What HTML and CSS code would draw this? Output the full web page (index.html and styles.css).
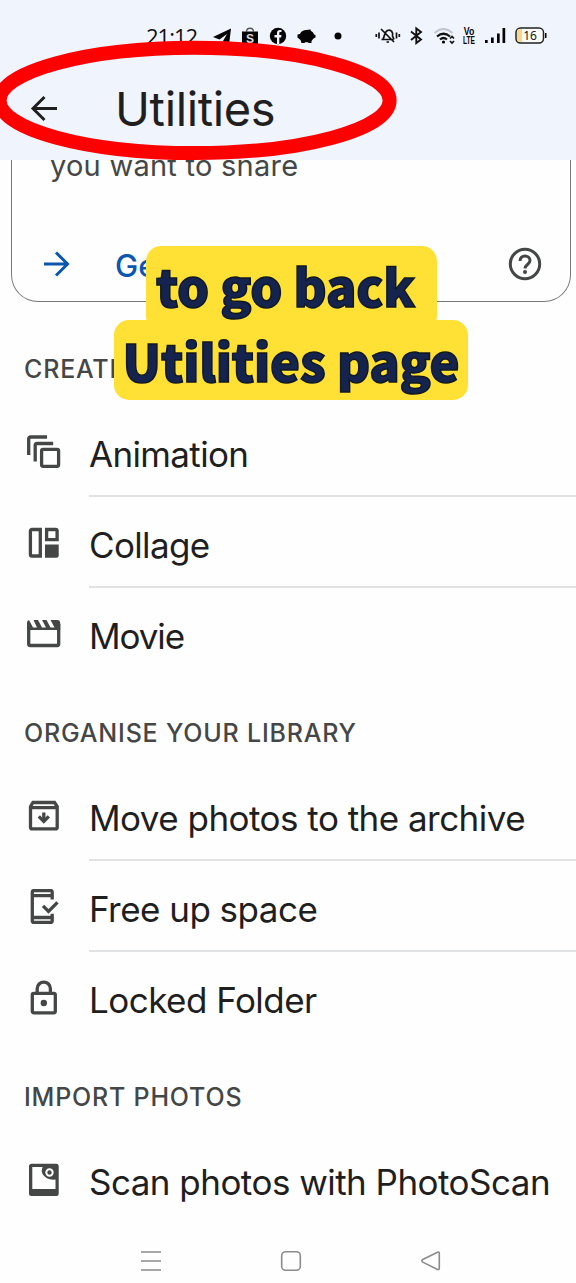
FILE: index.html
```html
<!DOCTYPE html>
<html lang="en">
<head>
<meta charset="utf-8">
<title>Utilities</title>
<link rel="stylesheet" href="styles.css">
</head>
<body>
<div class="screen">
  <header class="top">
    <div class="status">
      <span class="clock">21:12</span>
      <svg class="status-icons" width="376" height="40" viewBox="200 15 376 40">
        <path d="M231 28.500 213 37l6.500 2.500L227 34l-4 7 6 4z"/>
        <path d="M242 31.500h16V45h-16z"/>
        <path d="M246.500 32c0-5 7-5 7 0" fill="none" stroke="#555" stroke-width="1.300"/>
        <text x="250" y="42.500" class="bag">S</text>
        <circle cx="278" cy="36" r="8.200"/>
        <path d="M277 44v-6.500h-2.500V35h2.500v-2c0-2.500 1.500-3.500 4.500-3v2c-2-.2-2.200.2-2.200 1.200V35h2.200l-.4 2.500h-1.800V44z" fill="#f0f4fd"/>
        <path d="M297.500 34.500l2.500-.5c1-3 4-4 6-4l4.500-.5.5 1.500c2 1 2.500 2 3 3.500l1.500.5v2.500l-2 1-2 2.500v2h-3l-.5-.8h-3l-.5.8h-3l-1-3-3-2.500z"/>
        <circle cx="338" cy="36" r="3.500"/>
        <g fill="none" stroke="#111" stroke-width="1.700">
          <path d="M381.500 39.500h12M383 39c2-3 1-7 4.500-8.500s6 2 5 5.500l1.500 3.500M381 29l13 13M386.500 42h2.500"/>
          <path d="M379 32.500v6M376.300 34v3M396.500 32.500v6M399.300 34v3"/>
          <path d="m411 31.500 10 8-4.700 3.500V28.500l4.700 3.500-10 8" stroke-width="1.900"/>
          <path d="M434.500 33q9-8 18 0" stroke="#c3c6ce" stroke-width="2"/>
          <path d="M437 36.500q6.500-5.500 13 0M440 39.500q3.500-3 7 0" stroke-width="2.200"/>
          <path d="m450 38.500 2-2 2 2M450 41l2 2 2-2"/>
        </g>
        <circle cx="443.500" cy="42" r="1.600"/>
        <text x="469" y="34.800" class="lte" textLength="10.500" lengthAdjust="spacingAndGlyphs">Vo</text>
        <text x="469" y="43.600" class="lte" textLength="12" lengthAdjust="spacingAndGlyphs">LTE</text>
        <path d="M485 40h2.700v3H485zM491 37.500h2.700V43H491zM497 33.500h2.700V43H497zM502.500 28h2.700v15h-2.700z"/>
        <rect x="516" y="28" width="27.500" height="15" rx="4.500" fill="#fbfbf8" stroke="#222" stroke-width="1.500"/>
        <path d="M517 32q0-3 3-3h2v13h-2q-3 0-3-3z" fill="#f5d88a"/>
        <path d="M545 33h1.500v5H545z"/>
        <text x="530" y="39.800" class="battery">16</text>
      </svg>
    </div>
    <div class="bar">
      <svg class="back" width="28" height="28" viewBox="0 0 28 28"><path d="M27 14.500H3M14.500 3 3 14.500 14.500 26"/></svg>
      <h1 class="title">Utilities</h1>
    </div>
  </header>

  <section class="card">
    <p class="card-text">you want to share</p>
    <div class="card-actions">
      <svg class="arrow" width="28" height="28" viewBox="0 0 28 28"><path d="M1 14h23M13 2.500 24.500 14 13 25.500"/></svg>
      <span class="action">Get started</span>
      <svg class="help" width="34" height="34" viewBox="0 0 34 34"><circle cx="17" cy="17" r="14.700"/><path d="M12 14c0-7 10-6.500 10-.5 0 4-5 4-5 8"/><circle cx="17" cy="25" r="2" class="solid"/></svg>
    </div>
  </section>

  <h2 class="heading">CREATE NEW</h2>
  <ul class="list">
    <li class="row">
      <svg class="icon" width="36" height="36" viewBox="0 0 36 36"><rect x="15.600" y="15.300" width="17" height="17" rx="1.500"/><path d="M2.700 21V5q0-2 2-2H21M9.200 27.500V11.500q0-2 2-2h16"/></svg>
      <span class="label l-animation">Animation</span>
    </li>
    <li class="row">
      <svg class="icon" width="36" height="36" viewBox="0 0 36 36"><path d="M14.300 4.500v26.500H6q-1.600 0-1.600-1.600V6q0-1.500 1.600-1.500zM20.600 4.500h9q1.500 0 1.500 1.500v8.700H20.600z"/><path class="solid" d="M19 19.500h13.700v10.700q0 2.500-2.500 2.500H19z"/></svg>
      <span class="label l-collage">Collage</span>
    </li>
    <li class="row">
      <svg class="icon" width="36" height="36" viewBox="0 0 36 36"><path d="M2.700 8v20q0 1.500 1.500 1.500h27q1.500 0 1.500-1.500V8"/><path class="solid" d="M1 7q0-2.500 2-3l4 7.500h4L7.500 4H12l4 7.500h4L16 4h4.500l4 7.500h4L24.500 4H31q3.200 0 3.200 3v7H1z"/></svg>
      <span class="label l-movie">Movie</span>
    </li>
  </ul>

  <h2 class="heading h-organise">ORGANISE YOUR LIBRARY</h2>
  <ul class="list">
    <li class="row">
      <svg class="icon" width="36" height="36" viewBox="0 0 36 36"><path d="M4.500 8.500 7 4.500h21.500l2.700 4v20.700q0 1.700-1.700 1.700H6.200q-1.700 0-1.700-1.700zM4.500 9.700h27M17.800 14.500v8"/><path d="m12.800 18.300 5 5 5-5"/></svg>
      <span class="label l-archive">Move photos to the archive</span>
    </li>
    <li class="row">
      <svg class="icon" width="36" height="36" viewBox="0 0 36 36"><path d="M26.200 10.500V3.300q0-1.700-1.700-1.700H8Q6.300 1.600 6.300 3.300v28.400q0 1.700 1.700 1.700h16.500q1.700 0 1.700-1.700v-7M6 6.700h20M6 28.500h20M17 16.800l5.500 5.500 9-9"/></svg>
      <span class="label l-space">Free up space</span>
    </li>
    <li class="row">
      <svg class="icon" width="36" height="36" viewBox="0 0 36 36"><rect x="6.300" y="13.300" width="23" height="19.500" rx="1.500"/><path d="M11.200 13V8.700a6.600 6.600 0 0 1 13.200 0V13"/><circle cx="17.800" cy="23" r="3.200" class="solid"/></svg>
      <span class="label l-locked">Locked Folder</span>
    </li>
  </ul>

  <h2 class="heading h-import">IMPORT PHOTOS</h2>
  <ul class="list">
    <li class="row">
      <svg class="icon" width="36" height="36" viewBox="0 0 36 36"><path class="solid" fill-rule="evenodd" d="M5.500 1.700h24.700q2.500 0 2.500 2.500V31.500q0 2.500-2.500 2.500H5.500Q3 34 3 31.500V4.200q0-2.500 2.500-2.500zM6.300 5v22h23.200V17.500q-9 1-13-5.500-1.500-3.500 0-7z"/><circle cx="23.500" cy="10.500" r="3.200" class="lens"/></svg>
      <span class="label l-scan">Scan photos with PhotoScan</span>
    </li>
  </ul>

  <nav class="nav">
    <svg width="22" height="22" viewBox="0 0 22 22"><path d="M1 2h20M1 11h20M1 20h20"/></svg>
    <svg width="22" height="22" viewBox="0 0 22 22"><rect x="1.700" y="1.700" width="18.600" height="18.600" rx="4"/></svg>
    <svg width="22" height="22" viewBox="0 0 22 22"><path d="M17.500 2.200 2.800 9.500q-2 1.300 0 2.600l14.700 7.300q1.800.6 1.800-1.400V3.500q0-1.900-1.800-1.300z"/></svg>
  </nav>

  <svg class="ring" width="400" height="130" viewBox="0 35 400 130"><ellipse cx="194.600" cy="100.400" rx="195" ry="52.700"/></svg>
  <div class="caption">
    <span class="caption-line one">to go back</span>
    <span class="caption-line two">Utilities page</span>
  </div>
</div>
</body>
</html>
```
FILE: styles.css
```css
* { box-sizing: border-box; }
body { margin: 0; background: #fefefe; }
.screen {
  position: relative;
  width: 576px;
  height: 1283px;
  overflow: hidden;
  font-family: Inter, "Liberation Sans", sans-serif;
  color: #1f1f1f;
}
.top { height: 160px; background: #f0f4fd; }
.status { display: flex; height: 60px; padding-top: 15px; }
.clock {
  width: 200px;
  padding: 7px 0 0 146px;
  font: 22px/28px "Open Sans", sans-serif;
  letter-spacing: -1px;
  white-space: nowrap;
  color: #111;
}
.status-icons { flex: none; fill: #050505; }
.bag { font: bold 12px "Liberation Sans", sans-serif; fill: #ddd; text-anchor: middle; }
.lte { font: bold 10.500px "Liberation Sans", sans-serif; text-anchor: middle; }
.battery { font: 12px "Open Sans", sans-serif; text-anchor: middle; }
.bar { display: flex; align-items: center; height: 96px; padding-left: 30px; }
.back, .arrow { fill: none; stroke: #1f1f1f; stroke-width: 3; }
.title { margin: 1px 0 0 57px; font-size: 47px; font-weight: 400; line-height: 60px; letter-spacing: -0.35px; }

.card {
  height: 142px;
  margin: 0 5px 13px 11px;
  border: solid #77797b;
  border-width: 0 1.500px 1.500px;
  border-radius: 0 0 27px 27px;
  overflow: hidden;
}
.card-text { margin: -12px 0 0 38px; font-size: 29px; line-height: 36px; letter-spacing: 0.25px; color: #444746; }
.card-actions { display: flex; align-items: center; height: 48px; margin-top: 56px; padding: 0 28px 0 31px; }
.arrow { stroke: #0b57b0; }
.action { flex: 1; margin: 2px 0 0 44px; font-size: 31px; font-weight: 500; color: #0b57b0; }
.help { fill: none; stroke: #444746; stroke-width: 3; }
.help .solid { fill: #444746; stroke: none; }

.heading {
  height: 91px;
  margin: 0;
  padding: 38px 0 0 24px;
  font-size: 25px;
  line-height: 32px;
  font-weight: 450;
  letter-spacing: 0.8px;
  color: #444746;
  white-space: nowrap;
}
.list { margin: 0; padding: 0; list-style: none; }
.row { display: flex; align-items: center; height: 91px; padding-left: 26px; }
.icon { flex: none; fill: none; stroke: #444746; stroke-width: 3.300; }
.icon .solid { fill: #444746; stroke: none; }
.icon .lens { stroke: #fefefe; stroke-width: 2; }
.label {
  flex: 1;
  display: flex;
  align-items: center;
  height: 91px;
  margin-left: 27px;
  padding-top: 7px;
  font-size: 35px;
  letter-spacing: -0.53px;
  white-space: nowrap;
  border-bottom: 2px solid #e1e2e3;
}
.l-animation, .l-collage { letter-spacing: -0.65px; }
.l-movie { letter-spacing: -1.1px; }
.row:last-child .label { border-bottom-color: transparent; }

.nav { display: flex; gap: 118px; padding: 25px 0 0 140px; fill: none; stroke: #8b8b8b; stroke-width: 1.600; }

.ring { position: absolute; left: 0; top: 35px; fill: none; stroke: #fd0000; stroke-width: 14; }
.caption {
  position: absolute;
  left: 114px;
  top: 246px;
  width: 354px;
  display: flex;
  flex-direction: column;
  align-items: flex-start;
  font-family: "Noto Sans CJK SC", sans-serif;
  font-weight: 900;
  font-size: 50.500px;
  letter-spacing: -0.2px;
  color: #14244f;
}
.caption-line { border-radius: 15px; background: #ffe135; text-align: center; white-space: nowrap; -webkit-text-stroke: 1.500px #111820; }
.one { position: relative; z-index: 1; width: 291px; height: 85px; margin-left: 32px; line-height: 79px; padding-right: 12px; }
.two { width: 354px; height: 80px; margin-top: -11px; line-height: 81px; }
```
